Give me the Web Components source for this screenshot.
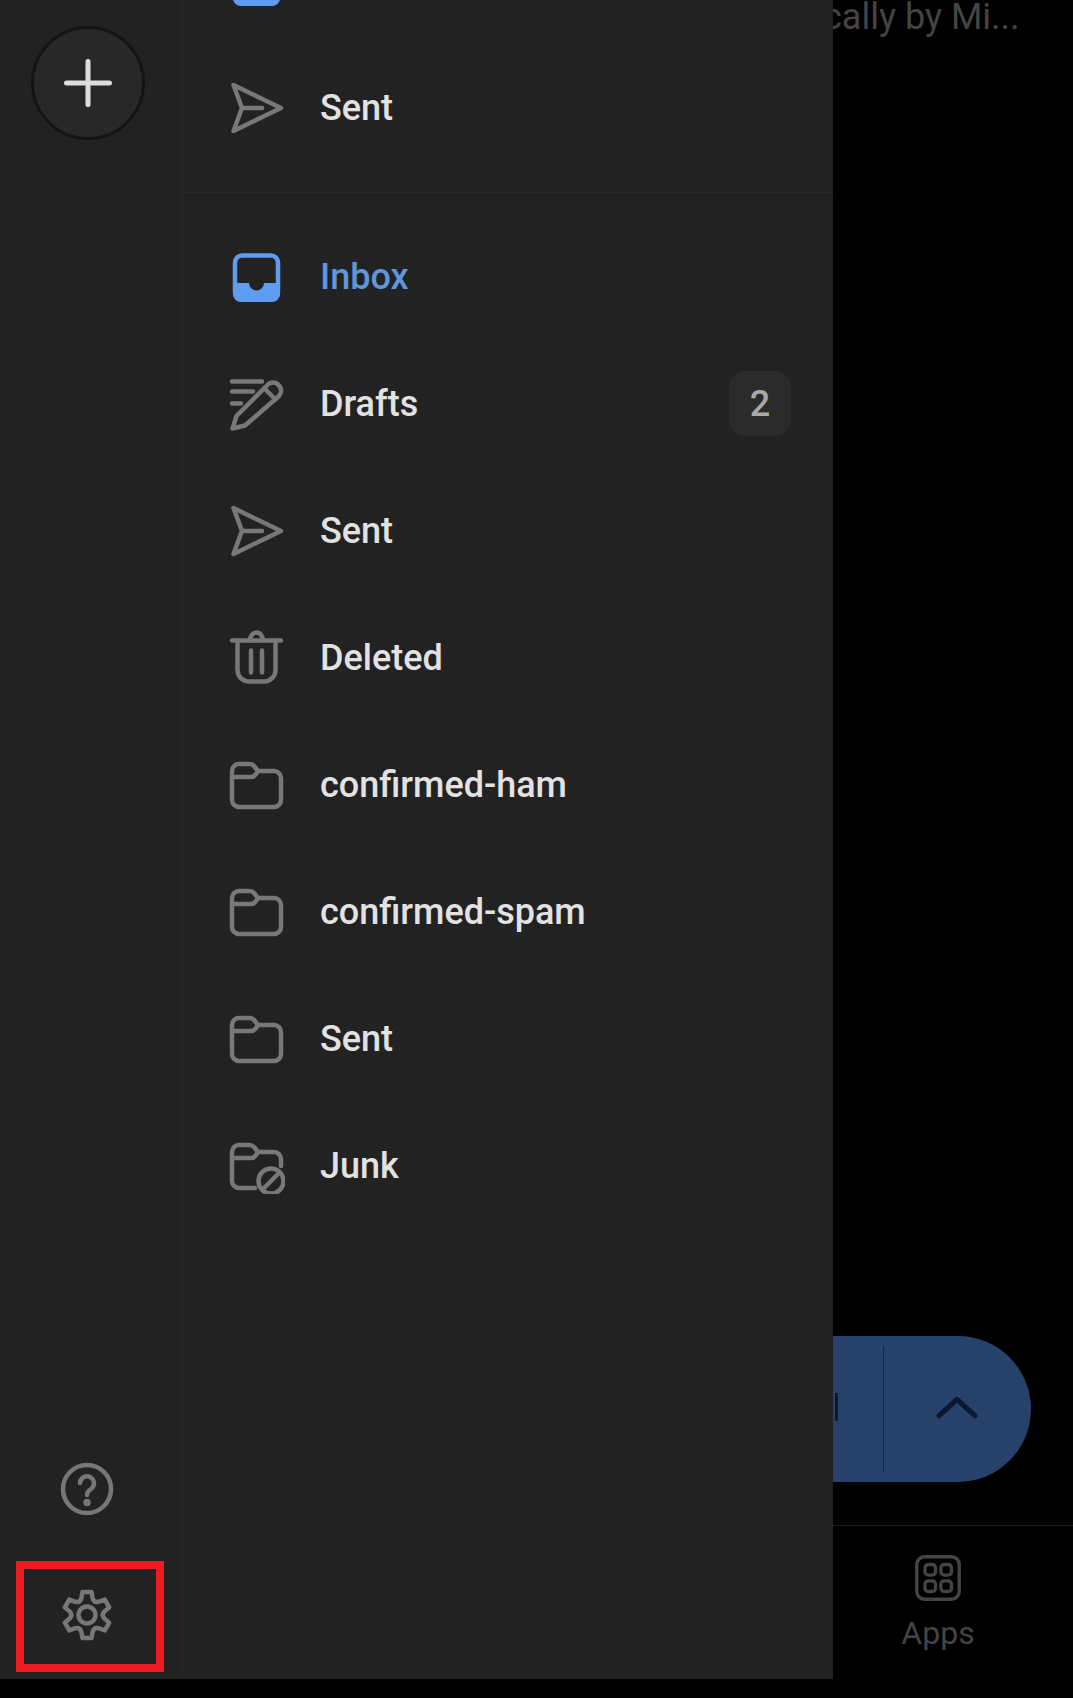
<!DOCTYPE html>
<html lang="en"><head><meta charset="utf-8"><title>Mail folders</title>
<style>
html,body{margin:0;padding:0;background:#000;height:100%;overflow:hidden}
body{font-family:Roboto,"Liberation Sans",sans-serif}
</style></head>
<body>
<mail-app>
  <nav-rail slot="rail"></nav-rail>
  <folder-drawer slot="drawer">
    <section-list class="top">
      <folder-row icon="inbox" active></folder-row>
      <folder-row icon="sent" label="Sent"></folder-row>
    </section-list>
    <section-list class="main">
      <folder-row icon="inbox" label="Inbox" active></folder-row>
      <folder-row icon="drafts" label="Drafts" badge="2"></folder-row>
      <folder-row icon="sent" label="Sent"></folder-row>
      <folder-row icon="trash" label="Deleted"></folder-row>
      <folder-row icon="folder" label="confirmed-ham"></folder-row>
      <folder-row icon="folder" label="confirmed-spam"></folder-row>
      <folder-row icon="folder" label="Sent"></folder-row>
      <folder-row icon="junk" label="Junk"></folder-row>
    </section-list>
  </folder-drawer>
  <mail-pane slot="pane"></mail-pane>
</mail-app>
<script>
function gearPath(){
  const R=23.5,r=17.5,c=28;
  let d='';
  for(let i=0;i<6;i++){
    const a=(-90+60*i)*Math.PI/180, h=11*Math.PI/180, v=19*Math.PI/180;
    const p=(rad,ang)=>(c+rad*Math.cos(ang)).toFixed(2)+' '+(c+rad*Math.sin(ang)).toFixed(2);
    if(i===0) d+='M'+p(r,a-v);
    d+='L'+p(R,a-h)+'L'+p(R,a+h)+'L'+p(r,a+v);
    d+='Q'+p(r-3.5,a+30*Math.PI/180)+' '+p(r,a+60*Math.PI/180-v);
  }
  return d+'Z';
}
const ICONS={
 sent:'<path d="M4.500 5 52 28 4.500 51 13 28Z"/><path d="M13 28H33"/>',
 inbox:'<rect x="6" y="6.500" width="43" height="44" rx="7"/><path stroke="none" fill="currentColor" d="M4 34H20A7.500 7.500 0 0 0 35 34H51V45a8 8 0 0 1-8 8H12a8 8 0 0 1-8-8Z"/>',
 drafts:'<path d="M3 5.500H33M3 15.500H24M3 27.500H12"/><path d="M3.500 52.500 7.500 40 38.500 9a7.500 7.500 0 0 1 11 0 7.500 7.500 0 0 1 .5 11L16 49.500Z"/><path d="M35.500 12.500 46.500 23.500"/>',
 trash:'<path d="M21 10.500a6.500 8 0 0 1 13 0"/><path d="M3 10.500H52"/><path d="M8.500 10.500V40a11.500 11.500 0 0 0 11.500 11.500H35A11.500 11.500 0 0 0 46.500 40V10.500"/><path d="M22 20.500V42.500M33 20.500V42.500"/>',
 folder:'<path d="M3 14a7 7 0 0 1 7-7H20a6 6 0 0 1 5 2l4 5H45a7 7 0 0 1 7 7V43a7 7 0 0 1-7 7H10a7 7 0 0 1-7-7Z"/><path d="M3 20H22q3 0 5-3l2-3"/>',
 junk:'<path d="M26 50H10a7 7 0 0 1-7-7V14a7 7 0 0 1 7-7H20a6 6 0 0 1 5 2l4 5H45a7 7 0 0 1 7 7V28"/><path d="M3 20H22q3 0 5-3l2-3"/><circle cx="42" cy="43" r="12.500"/><path d="M34 51 50 35"/>',
 gear:'<path d="'+gearPath()+'"/><circle cx="28" cy="28" r="8.500"/>',
 help:'<circle cx="28" cy="28" r="24"/><path d="M21 22a7 7 0 1 1 11 6c-3 2-4 3-4 6"/><circle cx="28" cy="41.500" r="1.500" fill="currentColor"/>',
 plus:'<path stroke-width="5" d="M28 6.500V49.500M6.500 28H49.500"/>',
 apps:'<rect x="6" y="6" width="44" height="44" rx="8" stroke-width="3.500"/><rect x="14.500" y="14" width="11" height="11" rx="3.500" stroke-width="3.500"/><rect x="31" y="14" width="11" height="11" rx="3.500" stroke-width="3.500"/><rect x="14.500" y="31" width="11" height="11" rx="3.500" stroke-width="3.500"/><rect x="31" y="31" width="11" height="11" rx="3.500" stroke-width="3.500"/>',
 chevron:'<path stroke-width="6.500" d="M5 38 28 17 51 38"/>'
};
class MailIcon extends HTMLElement{
  connectedCallback(){
    const s=this.attachShadow({mode:'open'});
    s.innerHTML=`<style>:host{display:block;width:56px;height:56px;flex:none}svg{display:block;width:100%;height:100%;fill:none;stroke:currentColor;stroke-width:4.5;stroke-linecap:round;stroke-linejoin:round}</style><svg viewBox="0 0 56 56">${ICONS[this.getAttribute('name')]||''}</svg>`;
  }
}
customElements.define('mail-icon',MailIcon);

class MailApp extends HTMLElement{
  constructor(){super();
    this.attachShadow({mode:'open'}).innerHTML=`<style>
      :host{display:flex;width:1073px;height:1698px;background:#000;overflow:hidden}
      .drawer{display:flex;width:833px;height:1679px;flex:none;background:#222;overflow:hidden}
    </style><div class="drawer"><slot name="rail"></slot><slot name="drawer"></slot></div><slot name="pane"></slot>`;
  }
}
customElements.define('mail-app',MailApp);

class NavRail extends HTMLElement{
  constructor(){super();
    this.attachShadow({mode:'open'}).innerHTML=`<style>
      :host{display:flex;flex-direction:column;align-items:center;width:183px;height:100%;flex:none;box-sizing:border-box;border-right:1px solid #272727;color:#777}
      .add{box-sizing:border-box;width:114px;height:114px;margin:26px 0 0 -7px;border-radius:50%;background:#282828;border:3px solid #141414;display:flex;align-items:center;justify-content:center;color:#ddd}
      .spacer{flex:1}
      .help{margin:0 0 44px -8px;width:56px;height:56px}
      .settings{box-sizing:border-box;width:148px;height:111px;margin:0 0 7px -2px;border:8px solid #ed1c24;display:flex;align-items:center;justify-content:center;padding:0 6px 3px 0}
    </style>
    <div class="add"><mail-icon name="plus"></mail-icon></div>
    <div class="spacer"></div>
    <div class="help"><mail-icon name="help"></mail-icon></div>
    <div class="settings"><mail-icon name="gear"></mail-icon></div>`;
  }
}
customElements.define('nav-rail',NavRail);

class FolderDrawer extends HTMLElement{
  constructor(){super();
    this.attachShadow({mode:'open'}).innerHTML=`<style>
      :host{display:flex;flex-direction:column;flex:1;min-width:0;margin-top:-83px}
    </style><slot></slot>`;
  }
}
customElements.define('folder-drawer',FolderDrawer);

class SectionList extends HTMLElement{
  constructor(){super();
    this.attachShadow({mode:'open'}).innerHTML=`<style>
      :host{display:block}
      :host(.top){padding-bottom:21px;border-bottom:1px solid #2a2a2a}
      :host(.main){padding-top:20px}
    </style><slot></slot>`;
  }
}
customElements.define('section-list',SectionList);

class FolderRow extends HTMLElement{
  connectedCallback(){
    const label=this.getAttribute('label')||'';
    const badge=this.getAttribute('badge');
    const active=this.hasAttribute('active');
    this.attachShadow({mode:'open'}).innerHTML=`<style>
      :host{display:flex;align-items:center;height:127px;box-sizing:border-box;padding:0 42px 0 46px;color:#e2e2e2;font:500 36px/42px Roboto,"Liberation Sans",sans-serif}
      mail-icon{color:${active?'#5f9cf0':'#787878'}}
      .label{margin-left:35px;flex:1;white-space:nowrap;color:${active?'#5f96dc':'inherit'}}
      .badge{width:62px;height:65px;border-radius:16px;background:#2b2b2b;color:#a8a8a8;display:flex;align-items:center;justify-content:center;font-weight:500}
    </style><mail-icon name="${this.getAttribute('icon')}"></mail-icon>${label?`<span class="label">${label}</span>`:''}${badge?`<span class="badge">${badge}</span>`:''}`;
  }
}
customElements.define('folder-row',FolderRow);

class MailPane extends HTMLElement{
  constructor(){super();
    this.attachShadow({mode:'open'}).innerHTML=`<style>
      :host{display:flex;flex-direction:column;flex:1;min-width:0;height:1698px;overflow:hidden;font-family:Roboto,"Liberation Sans",sans-serif}
      .subject{color:#444;font-size:36px;line-height:36px;white-space:nowrap;margin-top:-1px;margin-left:-10px}
      .spacer{flex:1}
      .fab{display:flex;width:198px;height:146px;margin-bottom:43px;background:#27426a;border-radius:0 73px 73px 0;color:#0b1830;flex:none}
      .split{width:50px;box-sizing:border-box;display:flex;align-items:center}
      .bar{width:3px;height:28px;margin:-4px 0 0 2px;background:#0b1830}
      .div{width:1px;height:127px;margin-top:10px;background:#13264a}
      .up{flex:1;display:flex;align-items:center;justify-content:center}
      .up mail-icon{width:44px;height:44px;margin:-3px 0 0 -1px}
      nav{height:172px;flex:none;border-top:1px solid #1c1c1c;display:flex;flex-direction:column;align-items:center;color:#444;font-size:32px;line-height:36px;padding:0 30px 0 0}
      nav mail-icon{margin-top:25px;width:54px;height:54px}
      nav span{margin-top:10px}
    </style>
    <div class="subject">cally by Mi...</div>
    <div class="spacer"></div>
    <div class="fab"><div class="split"><div class="bar"></div></div><div class="div"></div><div class="up"><mail-icon name="chevron"></mail-icon></div></div>
    <nav><mail-icon name="apps"></mail-icon><span>Apps</span></nav>`;
  }
}
customElements.define('mail-pane',MailPane);
</script>
</body></html>
